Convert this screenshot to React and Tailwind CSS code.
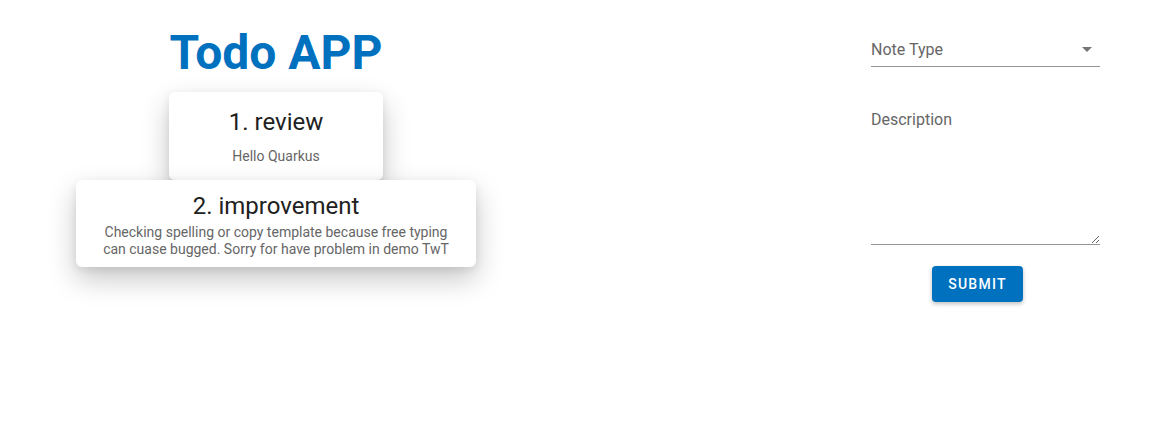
import React, { useState } from "react";

const notes = [
  { id: 1, type: "review", text: "Hello Quarkus", width: "w-[214px]" },
  {
    id: 2,
    type: "improvement",
    text: "Checking spelling or copy template because free typing can cuase bugged. Sorry for have problem in demo TwT",
    width: "w-[400px]",
  },
];

export default function App() {
  const [description, setDescription] = useState("");

  return (
    <main
      className="min-h-screen w-full bg-white flex"
      style={{ fontFamily: "Roboto, 'Liberation Sans', sans-serif" }}
    >
      {/* Notes list */}
      <div className="w-[552px] flex flex-col items-center pt-[22px]">
        <h1 className="text-[48px] font-bold leading-[62px] text-[#0071bf] mb-[8px]">
          Todo APP
        </h1>
        {notes.map((note) => (
          <div
            key={note.id}
            className={`${note.width} bg-white rounded-[6px] text-center px-[16px] shadow-[0_12px_28px_rgba(0,0,0,0.22),0_3px_8px_rgba(0,0,0,0.08)] ${
              note.id === 1 ? "h-[88px] pt-[15px]" : "h-[87px] pt-[11px]"
            }`}
          >
            <div className="text-[24px] leading-[30px] text-[#212121]">
              {note.id}. {note.type}
            </div>
            <div
              className={`text-[14px] text-[#666] ${
                note.id === 1 ? "leading-[20px] mt-[9px]" : "leading-[16.5px] mt-[3px]"
              }`}
            >
              {note.text}
            </div>
          </div>
        ))}
      </div>

      {/* Form */}
      <div className="ml-[319px] w-[229px] flex flex-col pt-[36px]">
        <div className="relative h-[31px] border-b border-[#949494] flex items-start cursor-pointer">
          <span className="text-[16px] leading-[28px] text-[#666]">Note Type</span>
          <svg
            className="absolute right-[8px] top-[11px]"
            width="10"
            height="5"
            viewBox="0 0 10 5"
          >
            <path d="M0 0 L10 0 L5 5 Z" fill="#757575" />
          </svg>
        </div>

        <textarea
          value={description}
          onChange={(e) => setDescription(e.target.value)}
          placeholder="Description"
          className="mt-[40px] h-[138px] w-full resize-y outline-none border-b border-[#949494] text-[16px] leading-[26px] text-[#212121] placeholder:text-[#666] bg-transparent"
        />

        <button className="mt-[21px] ml-[61px] w-[91px] h-[36px] rounded-[4px] bg-[#0071bf] text-white text-[14px] font-medium uppercase tracking-[1.25px] shadow-[0_2px_4px_rgba(0,0,0,0.25)]">
          Submit
        </button>
      </div>
    </main>
  );
}
